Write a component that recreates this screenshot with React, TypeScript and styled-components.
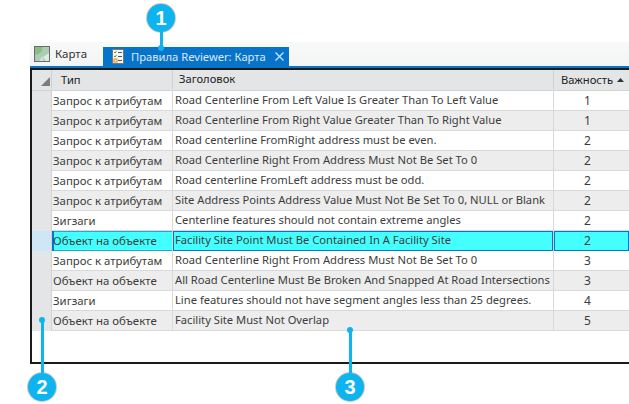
import React from 'react';
import styled, { createGlobalStyle } from 'styled-components';

const GlobalStyle = createGlobalStyle`
  html, body { margin: 0; padding: 0; background: #fff; overflow: hidden; }
  body { font-family: "Noto Sans", "Open Sans", sans-serif; }
`;

const rows = [
  { type: 'Запрос к атрибутам', title: 'Road Centerline From Left Value Is Greater Than To Left Value', level: 1 },
  { type: 'Запрос к атрибутам', title: 'Road Centerline From Right Value Greater Than To Right Value', level: 1 },
  { type: 'Запрос к атрибутам', title: 'Road centerline FromRight address must be even.', level: 2 },
  { type: 'Запрос к атрибутам', title: 'Road Centerline Right From Address Must Not Be Set To 0', level: 2 },
  { type: 'Запрос к атрибутам', title: 'Road centerline FromLeft address must be odd.', level: 2 },
  { type: 'Запрос к атрибутам', title: 'Site Address Points Address Value Must Not Be Set To 0, NULL or Blank', level: 2 },
  { type: 'Зигзаги', title: 'Centerline features should not contain extreme angles', level: 2 },
  { type: 'Объект на объекте', title: 'Facility Site Point Must Be Contained In A Facility Site', level: 2, selected: true },
  { type: 'Запрос к атрибутам', title: 'Road Centerline Right From Address Must Not Be Set To 0', level: 3 },
  { type: 'Объект на объекте', title: 'All Road Centerline Must Be Broken And Snapped At Road Intersections', level: 3 },
  { type: 'Зигзаги', title: 'Line features should not have segment angles less than 25 degrees.', level: 4 },
  { type: 'Объект на объекте', title: 'Facility Site Must Not Overlap', level: 5 },
];

export default function App() {
  return (
    <>
      <GlobalStyle />
      <Page>
        <TabStrip>
          <MapTab>
            <MapIcon />
            Карта
          </MapTab>
          <ActiveTab>
            <RulesIcon />
            <ActiveLabel>Правила Reviewer: Карта</ActiveLabel>
            <CloseIcon />
          </ActiveTab>
        </TabStrip>
        <Pane>
          <Grid>
            <HeaderRow>
              <Corner>
                <svg width="10" height="10" viewBox="0 0 10 10">
                  <path d="M10 1V10H1Z" fill="#7d7d7d" />
                </svg>
              </Corner>
              <TypeHead>Тип</TypeHead>
              <TitleHead>Заголовок</TitleHead>
              <LevelHead>
                Важность
                <svg width="7" height="4" viewBox="0 0 7 4">
                  <path d="M3.5 0L7 4H0Z" fill="#333" />
                </svg>
              </LevelHead>
            </HeaderRow>
            {rows.map((row, i) => (
              <Row key={i} $odd={i % 2 === 1} $selected={row.selected}>
                <RowHeader $selected={row.selected} />
                <TypeCell $selected={row.selected}>{row.type}</TypeCell>
                <TitleCell $selected={row.selected}>{row.title}</TitleCell>
                <LevelCell $selected={row.selected}>{row.level}</LevelCell>
              </Row>
            ))}
          </Grid>
        </Pane>
        <Callout $left={147} $top={4} $stem="down" $stemSize={16}>1</Callout>
        <Callout $left={28} $top={373} $stem="up" $stemSize={53}>2</Callout>
        <Callout $left={336} $top={373} $stem="up" $stemSize={43}>3</Callout>
      </Page>
    </>
  );
}

function MapIcon() {
  return (
    <svg width="16" height="16" viewBox="0 0 16 16">
      <rect x="0.5" y="0.5" width="15" height="15" fill="#a9cdb0" stroke="#6b6b6b" />
      <path d="M1 1H9L7 6 3 9 1 8Z" fill="#8dbb85" />
      <path d="M12 15L9 11 15 7V15Z" fill="#dfe9e6" />
      <path d="M5 15L8 10 10 15Z" fill="#c9e0e6" />
    </svg>
  );
}

function RulesIcon() {
  return (
    <svg width="12" height="15" viewBox="0 0 12 15">
      <rect x="0.5" y="0.5" width="11" height="14" fill="#f7f7f3" stroke="#777" />
      <path d="M2 3L3 4 4.5 2M2 7L3 8 4.5 6" fill="none" stroke="#4a9e3f" />
      <rect x="2" y="10" width="3" height="3" fill="none" stroke="#e08a2b" />
      <path d="M6 3.5H10M6 7.5H10M6 11.5H10" stroke="#555" />
    </svg>
  );
}

function CloseIcon() {
  return (
    <svg width="9" height="9" viewBox="0 0 9 9">
      <path d="M0.5 0.5L8.5 8.5M8.5 0.5L0.5 8.5" stroke="#cfe4f5" strokeWidth="1.2" fill="none" />
    </svg>
  );
}

const Page = styled.div`
  position: relative;
  width: 629px;
  height: 404px;
  padding: 42px 0 0 30px;
  box-sizing: border-box;
  overflow: hidden;
  font-size: 11.2px;
  color: #3c3c3c;
`;

const TabStrip = styled.div`
  display: flex;
  align-items: flex-end;
  height: 24px;
  background: linear-gradient(#f8f9f9, #f3f5f5);
  border-bottom: 2px solid #0874c9;
`;

const MapTab = styled.div`
  display: flex;
  align-items: center;
  gap: 5px;
  width: 73px;
  height: 24px;
  padding: 0 0 1px 4px;
  box-sizing: border-box;
  color: #333;
  font-size: 11.5px;
`;

const ActiveTab = styled.div`
  display: flex;
  align-items: center;
  width: 186px;
  height: 19px;
  padding-left: 9px;
  box-sizing: border-box;
  background: #0874c9;
  color: #dceaf6;
`;

const ActiveLabel = styled.span`
  margin: 0 9px 0 7px;
  font-size: 11.2px;
  white-space: nowrap;
`;

const Pane = styled.div`
  height: 296px;
  box-sizing: border-box;
  border-left: 2px solid #1a1a1a;
  border-top: 2px solid #1a1a1a;
  border-bottom: 2px solid #1a1a1a;
  background: #fff;
`;

const Grid = styled.div`
  display: flex;
  flex-direction: column;
`;

const cols = `
  display: grid;
  grid-template-columns: 20px 121px 381px 75px;
  box-sizing: border-box;
`;

const HeaderRow = styled.div`
  ${cols}
  height: 21px;
  padding-bottom: 1px;
  background: #e4e5e6;
  border-bottom: 1px solid #d2d3d4;
`;

const Corner = styled.div`
  display: flex;
  align-items: flex-end;
  justify-content: flex-end;
  padding: 0 1px 3px 0;
  border-right: 1px solid #cfd0d1;
`;

const HeadCell = styled.div`
  display: flex;
  align-items: center;
  border-right: 1px solid #cfd0d1;
  color: #222;
  font-size: 11.2px;
  white-space: nowrap;
`;

const TypeHead = styled(HeadCell)`
  padding-left: 9px;
`;

const TitleHead = styled(HeadCell)`
  padding-left: 6px;
  padding-bottom: 2px;
`;

const LevelHead = styled(HeadCell)`
  gap: 4px;
  padding-left: 7px;
  border-right: 0;
`;

const Row = styled.div<{ $odd?: boolean; $selected?: boolean }>`
  ${cols}
  height: 20px;
  background: ${(p) => (p.$selected ? '#44ffff' : p.$odd ? '#ededed' : '#fff')};
  border-bottom: 1px solid #d9d9d9;
`;

const RowHeader = styled.div<{ $selected?: boolean }>`
  background: ${(p) => (p.$selected ? '#cfe6f7' : '#e4e5e6')};
  border-right: 1px solid #d2d3d4;
`;

const Cell = styled.div<{ $selected?: boolean }>`
  display: flex;
  align-items: center;
  height: 20px;
  box-sizing: border-box;
  white-space: nowrap;
  overflow: hidden;
  border-right: 1px solid #d9d9d9;
  ${(p) => p.$selected && 'box-shadow: inset 0 0 0 1px #0874c9;'}
`;

const TypeCell = styled(Cell)`
  padding-left: 1px;
  padding-bottom: 1px;
  font-size: 11.4px;
  ${(p) => p.$selected && 'box-shadow: inset 2px 0 0 #0874c9, inset 0 1px 0 #2aa4d8, inset 0 -1px 0 #2aa4d8;'}
`;

const TitleCell = styled(Cell)`
  padding-left: 2px;
  padding-bottom: 4px;
`;

const LevelCell = styled(Cell)`
  justify-content: center;
  padding: 0 8px 2px 0;
  border-right: 0;
  font-size: 12px;
`;

const Callout = styled.div<{ $left: number; $top: number; $stem: 'up' | 'down'; $stemSize: number }>`
  position: absolute;
  left: ${(p) => p.$left}px;
  top: ${(p) => p.$top}px;
  display: flex;
  align-items: center;
  justify-content: center;
  width: 28px;
  height: 28px;
  border-radius: 50%;
  background: #0db4ee;
  box-shadow: 0 0 0 1px #c9c9c9;
  color: #fff;
  font-family: "Liberation Sans", sans-serif;
  font-size: 20px;
  font-weight: 700;

  &::before {
    content: '';
    position: absolute;
    left: 12.5px;
    width: 3px;
    height: ${(p) => p.$stemSize}px;
    background: #0db4ee;
    ${(p) => (p.$stem === 'down' ? 'top: 28px;' : 'bottom: 28px;')}
  }

  &::after {
    content: '';
    position: absolute;
    left: 11px;
    width: 6px;
    height: 6px;
    border-radius: 50%;
    background: #0db4ee;
    ${(p) => (p.$stem === 'down' ? `top: ${p.$stemSize + 25}px;` : `bottom: ${p.$stemSize + 25}px;`)}
  }
`;
